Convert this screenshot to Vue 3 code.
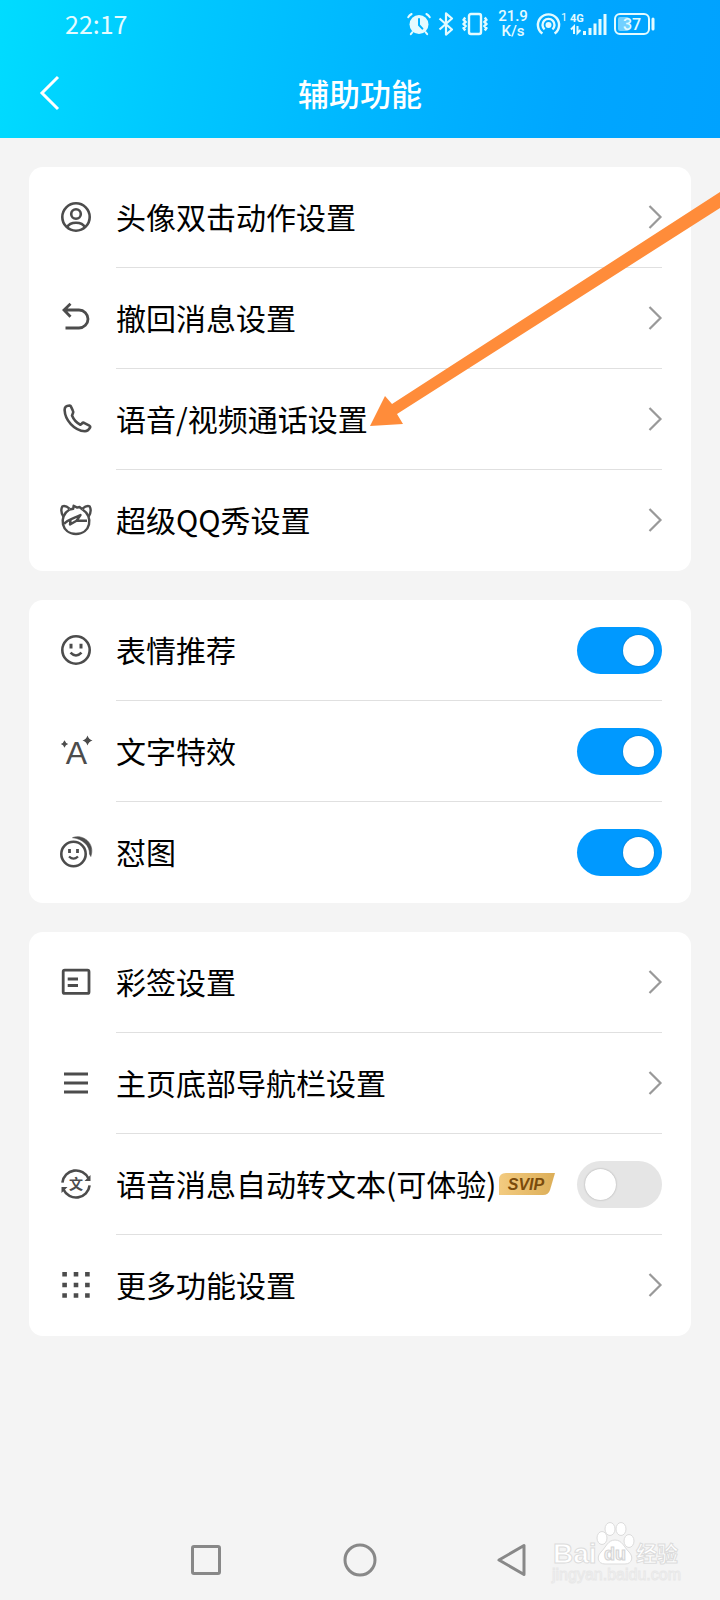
<template>
  <div class="page">
    <!-- 顶部栏 -->
    <header class="top">
      <div class="status-bar">
        <span class="time">22:17</span>
        <div class="status-icons">
          <svg width="24" height="24" viewBox="0 0 24 24" fill="none" stroke="currentColor" stroke-width="2" stroke-linecap="round">
            <circle cx="12" cy="12.5" r="9.5" fill="currentColor" stroke="none" />
            <path d="M1.2 5.2A9 9 0 0 1 4.6 2M22.8 5.2A9 9 0 0 0 19.4 2M5.4 20.2l-1.600 2M18.6 20.2l1.600 2" />
            <path d="M12 7v6l3.400 3.600" stroke="#00b2ff" />
          </svg>
          <svg width="16" height="24" viewBox="0 0 16 24" fill="none" stroke="currentColor" stroke-width="2.200" stroke-linejoin="round">
            <path d="M1.500 6.500l12.500 11L8 22.600V1.400l6 5.100L1.500 17.500" />
          </svg>
          <svg width="28" height="24" viewBox="0 0 28 24" fill="none" stroke="currentColor" stroke-width="2.400">
            <rect x="8" y="2" width="12" height="20" rx="2" />
            <path d="M4.200 5.500L2.600 7.800l2 2.100-2 2.100 2 2.100-2 2.100 1.600 2.300M23.800 5.500L25.400 7.800l-2 2.100 2 2.100-2 2.100 2 2.100-1.600 2.300" />
          </svg>
          <span class="speed"><span>21.9</span><span>K/s</span></span>
          <svg width="70" height="26" viewBox="0 0 70 26" fill="none" stroke="currentColor" stroke-width="2.400">
            <path d="M5.400 22.600A10.600 10.600 0 1 1 17.600 22.600" />
            <path d="M7.600 18.400A6 6 0 1 1 15.400 18.400" />
            <circle cx="11.500" cy="14" r="3" fill="currentColor" stroke="none" />
            <text class="sim" x="24" y="10">1</text>
            <text class="net" x="33" y="11">4G</text>
            <path d="M34 18.500l3-3V23M43.500 19l-3 3v-7" stroke-width="2" />
            <path d="M47.500 20v4M53 17v7M58 12.500v11.500M63 8v16M68 3v21" stroke-width="3" />
          </svg>
          <svg width="41" height="24" viewBox="0 0 41 24">
            <rect x="1" y="2" width="34" height="20" rx="5" fill="none" stroke="currentColor" stroke-width="2" />
            <rect x="4" y="5" width="11" height="14" rx="2" fill="currentColor" opacity="0.500" />
            <path d="M39 7v10" stroke="currentColor" stroke-width="3" stroke-linecap="round" />
            <text class="level" x="18" y="18" text-anchor="middle">37</text>
          </svg>
        </div>
      </div>
      <div class="nav-bar">
        <button class="back" aria-label="返回">
          <svg width="20" height="36" viewBox="0 0 20 36" fill="none" stroke="currentColor" stroke-width="3">
            <path d="M18 2L2 18l16 16" />
          </svg>
        </button>
        <h1 class="title">辅助功能</h1>
      </div>
    </header>

    <!-- 设置分组 -->
    <main class="content">
      <section v-for="(group, index) in groups" :key="index" class="card">
        <component
          :is="item.type === 'switch' ? 'label' : 'button'"
          v-for="item in group"
          :key="item.text"
          class="row"
        >
          <svg class="row-icon" width="32" height="32" viewBox="0 0 32 32" fill="none" stroke="currentColor" stroke-width="2.600">
            <template v-if="item.icon === 'avatar'">
              <circle cx="16" cy="16" r="13.700" />
              <circle cx="16" cy="13" r="4.800" />
              <path d="M7 26.300C10 20.300 22 20.300 25 26.300" />
            </template>
            <template v-else-if="item.icon === 'undo'">
              <path d="M10.500 1.800L4 8l6.500 6.800M4 8h15a9 9 0 0 1 0 18H5.500" stroke-width="2.800" />
            </template>
            <template v-else-if="item.icon === 'phone'">
              <path d="M9.600 2.500Q4.600 2.600 4.600 7C5 17 14 27.500 25 28.300Q28 28.300 30.200 24.400 30.600 23.200 29.400 22.600L24 19.800Q22.800 19.400 22 20.400L20.400 21.800C16.500 20 13.400 16 12 12.600L13 10Q13.600 9 12.900 7.800L11 3.600Q10.600 2.600 9.600 2.500Z" stroke-width="2.600" stroke-linejoin="round" />
            </template>
            <template v-else-if="item.icon === 'mascot'">
              <g stroke-width="2.400" stroke-linejoin="round">
                <path d="M9.500 4.600C7 2.400 4.500 1.600 2.400 2.300 1 5 1.400 9.500 3.400 12.600M22.500 4.600C25 2.400 27.500 1.600 29.600 2.300 31 5 30.600 9.500 28.600 12.600" />
                <path d="M9.500 5.500L13.200 4.800 13.600 1.800 17.200 3.600 19.500 3 22.500 5.500" />
                <path d="M9.500 5.500C-2 12.500 1.500 30 16 30S34 12.500 22.500 5.500" />
                <path d="M4 20C7 16 13 14.700 20.500 11L16.500 16.700H27M16.500 16.700L10 20.500 10.500 16" />
              </g>
            </template>
            <template v-else-if="item.icon === 'smile'">
              <circle cx="16" cy="16" r="13.700" />
              <path d="M11 9.800v4.600M21 9.800v4.600" stroke-width="3" />
              <path d="M10.500 18.700Q16 24.300 21.500 18.700" />
            </template>
            <template v-else-if="item.icon === 'effect'">
              <text class="glyph-a" x="16.500" y="29" text-anchor="middle">A</text>
              <path d="M27.500 0.500q1.200 4 5 5-3.800 1-5 5-1.200-4-5-5 3.800-1 5-5zM4.500 5.300q1 2.800 3.700 3.700-2.700.9-3.700 3.700-1-2.800-3.700-3.700 2.700-.9 3.700-3.700z" fill="currentColor" stroke="none" />
            </template>
            <template v-else-if="item.icon === 'stickers'">
              <circle cx="13.500" cy="18" r="12.200" />
              <path d="M9.500 13v4M17.500 13v4" stroke-width="2.800" />
              <path d="M9 20.500Q13.500 24.800 18 20.500" stroke-width="2.300" />
              <path d="M12.500 1.700C23-2.500 35.500 7.500 30.800 20.500L29.500 18C30 10 22.500 2.500 12.500 1.700Z" fill="currentColor" stroke="currentColor" stroke-width="0.600" />
            </template>
            <template v-else-if="item.icon === 'signature'">
              <rect x="3.200" y="4.200" width="25.800" height="23.200" rx="1.500" stroke-width="2.800" />
              <path d="M7.700 13H18M7.700 19.500H18" stroke-width="2.800" />
            </template>
            <template v-else-if="item.icon === 'menu'">
              <path d="M4 7h24M4 16h24M4 25h24" stroke-width="2.800" />
            </template>
            <template v-else-if="item.icon === 'convert'">
              <path d="M2.400 14.600A13.700 13.700 0 0 1 28.500 10.500M29.600 17.400A13.700 13.700 0 0 1 3.500 21.500" />
              <path d="M30.500 7v6h-6zM1.500 25v-6H7.500z" fill="currentColor" stroke="none" />
              <text class="glyph-wen" x="16" y="21" text-anchor="middle">文</text>
            </template>
            <template v-else>
              <path d="M2.300 5.300H30M2.300 16H30M2.300 26.500H30" stroke-width="4.600" stroke-dasharray="4.600 6.800" />
            </template>
          </svg>
          <span class="row-body">
            <span class="row-text">{{ item.text }}</span>
            <svg v-if="item.svip" class="svip" width="56" height="22" viewBox="0 0 56 22">
              <defs>
                <linearGradient id="gold" x1="0" y1="0" x2="1" y2="0">
                  <stop offset="0" stop-color="#f3cb80" />
                  <stop offset="1" stop-color="#dcae58" />
                </linearGradient>
              </defs>
              <path d="M7 0H56L51 17Q49.500 22 44 22H0V7Q0 0 7 0Z" fill="url(#gold)" />
              <text x="27" y="17" text-anchor="middle">SVIP</text>
            </svg>
            <input v-if="item.type === 'switch'" v-model="item.on" class="switch" type="checkbox" />
            <svg v-else class="chevron" width="14" height="24" viewBox="0 0 14 24" fill="none" stroke="currentColor" stroke-width="2.200">
              <path d="M1.500 1L12.500 12l-11 11" />
            </svg>
          </span>
        </component>
      </section>
    </main>

    <!-- 系统导航键 -->
    <nav class="system-nav">
      <button aria-label="最近任务">
        <svg width="34" height="34" viewBox="0 0 34 34"><rect x="3.500" y="3.500" width="27" height="27" rx="1.500" /></svg>
      </button>
      <button aria-label="主屏幕">
        <svg width="34" height="34" viewBox="0 0 34 34"><circle cx="17" cy="17" r="15" /></svg>
      </button>
      <button aria-label="返回上一级">
        <svg width="34" height="34" viewBox="0 0 34 34"><path d="M27 2.500V31.500L2 17Z" /></svg>
      </button>
    </nav>

    <!-- 指示箭头 -->
    <svg class="arrow" width="350" height="238" viewBox="370 190 350 238">
      <path d="M370 426L385 396 392 404 720 192V208L397 414 403 424Z" fill="#ff8c3a" />
    </svg>

    <!-- 水印 -->
    <svg class="watermark" width="136" height="68" viewBox="0 0 136 68">
      <g class="outline">
        <text class="brand" x="5" y="45">Bai</text>
        <ellipse cx="54" cy="20" rx="5" ry="6.500" />
        <ellipse cx="62" cy="11" rx="5" ry="6.500" />
        <ellipse cx="73" cy="11" rx="5" ry="6.500" />
        <ellipse cx="81" cy="23" rx="5" ry="6.500" />
        <path d="M67 22C60 22 58 29 53 34 48 39 50 46 57 46H77C84 46 86 39 81 34 76 29 74 22 67 22Z" />
        <text class="brand-cn" x="88" y="43">经验</text>
      </g>
      <text class="brand-du" x="67" y="42" text-anchor="middle">du</text>
      <text class="url" x="4" y="62">jingyan.baidu.com</text>
    </svg>
  </div>
</template>

<script setup>
import { ref } from 'vue'

// 列表数据
const groups = ref([
  [
    { icon: 'avatar', text: '头像双击动作设置', type: 'link' },
    { icon: 'undo', text: '撤回消息设置', type: 'link' },
    { icon: 'phone', text: '语音/视频通话设置', type: 'link' },
    { icon: 'mascot', text: '超级QQ秀设置', type: 'link' }
  ],
  [
    { icon: 'smile', text: '表情推荐', type: 'switch', on: true },
    { icon: 'effect', text: '文字特效', type: 'switch', on: true },
    { icon: 'stickers', text: '怼图', type: 'switch', on: true }
  ],
  [
    { icon: 'signature', text: '彩签设置', type: 'link' },
    { icon: 'menu', text: '主页底部导航栏设置', type: 'link' },
    { icon: 'convert', text: '语音消息自动转文本(可体验)', type: 'switch', on: false, svip: true },
    { icon: 'more', text: '更多功能设置', type: 'link' }
  ]
])
</script>

<style>
body {
  background: #f4f4f4;
}
</style>

<style scoped>
.page {
  position: relative;
  display: flex;
  flex-direction: column;
  min-height: 100vh;
  overflow: hidden;
  background: #f4f4f4;
  font-family: "Noto Sans CJK SC", "Noto Sans", sans-serif;
  color: #000;
}

button {
  padding: 0;
  border: none;
  background: none;
  font: inherit;
  color: inherit;
  cursor: pointer;
}

svg {
  display: block;
  flex-shrink: 0;
  overflow: visible;
}

.top {
  background: linear-gradient(100deg, #00dcff 0%, #00c8ff 25%, #00b6ff 52%, #00a6ff 80%, #00a2ff 100%);
  color: #e4fbff;
}

.status-bar {
  display: flex;
  align-items: center;
  justify-content: space-between;
  height: 48px;
  padding: 0 65px;
}

.time {
  font-size: 25px;
  line-height: 46px;
  padding-bottom: 2px;
}

.status-icons {
  display: flex;
  align-items: center;
  gap: 7px;
}

.speed {
  display: flex;
  flex-direction: column;
  align-items: center;
  width: 34px;
  font-family: Roboto, sans-serif;
  font-size: 15px;
  font-weight: 500;
  line-height: 15px;
}

.status-icons text {
  fill: currentColor;
  stroke: none;
  font-family: Roboto, sans-serif;
}

.sim {
  font-size: 11px;
}

.net {
  font-size: 11px;
  font-weight: 700;
}

.level {
  font-size: 16px;
  font-weight: 500;
}

.nav-bar {
  display: grid;
  grid-template-columns: 60px 1fr 60px;
  align-items: center;
  height: 90px;
  color: #fff;
}

.back {
  justify-self: end;
}

.title {
  margin: 0;
  font-size: 31px;
  font-weight: 500;
  line-height: 44px;
  text-align: center;
}

.content {
  display: flex;
  flex-direction: column;
  gap: 29px;
  padding: 29px;
}

.card {
  border-radius: 14px;
  background: #fff;
}

.row {
  display: flex;
  align-items: center;
  gap: 24px;
  box-sizing: border-box;
  width: 100%;
  padding: 0 29px 0 31px;
  text-align: left;
  cursor: pointer;
}

.row-icon {
  margin-bottom: 1px;
  color: #4c4c4c;
}

.row-body {
  display: flex;
  flex: 1;
  align-items: center;
  box-sizing: border-box;
  height: 101px;
  border-bottom: 1px solid #e0e0e0;
}

.row:last-child .row-body {
  border-bottom-color: transparent;
}

.row-text {
  padding-bottom: 2px;
  font-size: 30px;
  line-height: 44px;
  white-space: nowrap;
}

.glyph-a {
  fill: currentColor;
  stroke: none;
  font-family: "Liberation Sans", sans-serif;
  font-size: 32px;
}

.glyph-wen {
  fill: currentColor;
  stroke: none;
  font-size: 14px;
  font-weight: 700;
}

.svip {
  margin-left: 3px;
}

.svip text {
  fill: #7a4b0c;
  font-family: "Liberation Sans", sans-serif;
  font-size: 16px;
  font-style: italic;
  font-weight: 700;
}

.chevron {
  margin-left: auto;
  color: #999;
}

.switch {
  appearance: none;
  flex-shrink: 0;
  width: 85px;
  height: 47px;
  margin: 0 0 0 auto;
  padding: 8px;
  box-sizing: border-box;
  border-radius: 24px;
  background: #e5e5e5;
  cursor: pointer;
}

.switch::before {
  content: '';
  display: block;
  width: 31px;
  height: 31px;
  border-radius: 50%;
  background: #fff;
  box-shadow: 0 0 2px rgba(0, 0, 0, 0.3);
}

.switch:checked {
  background: #0099ff;
}

.switch:checked::before {
  margin-left: auto;
}

.system-nav {
  display: flex;
  justify-content: center;
  margin-top: auto;
  height: 80px;
}

.system-nav button {
  display: flex;
  align-items: center;
  justify-content: center;
  width: 154px;
}

.system-nav svg {
  fill: none;
  stroke: #888;
  stroke-width: 3px;
  stroke-linejoin: round;
}

.arrow {
  position: absolute;
  top: 190px;
  right: 0;
  pointer-events: none;
}

.watermark {
  position: absolute;
  right: 36px;
  bottom: 14px;
  font-family: "Liberation Sans", "Noto Sans CJK SC", sans-serif;
  pointer-events: none;
}

.outline {
  fill: #fff;
  stroke: #dcdcdc;
  stroke-width: 1px;
}

.brand {
  font-size: 28px;
  font-weight: 700;
}

.brand-cn {
  font-size: 21px;
  font-weight: 700;
}

.brand-du {
  fill: #f4f4f4;
  stroke: #d4d4d4;
  stroke-width: 1px;
  font-size: 18px;
  font-weight: 700;
}

.url {
  fill: #fafafa;
  stroke: #e8e8e8;
  stroke-width: 1px;
  font-size: 16px;
}
</style>
